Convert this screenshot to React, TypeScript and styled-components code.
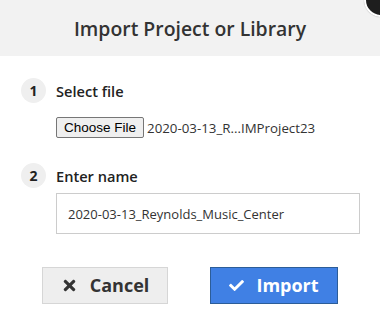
import styled, { createGlobalStyle } from 'styled-components'
import { FaTimes, FaCheck } from 'react-icons/fa'

const GlobalStyle = createGlobalStyle`
  html, body { margin: 0; padding: 0; background: #fff; }
  body { font-family: "Open Sans", "Liberation Sans", sans-serif; color: #333; }
`

// ─── Layout ───────────────────────────────────────────────────────────────────

const Dialog = styled.div`
  position: relative;
  width: 380px;
  height: 335px;
  overflow: hidden;
  background: #fff;
`

const Header = styled.header`
  height: 56px;
  background: #f2f2f2;
  display: flex;
  align-items: center;
  justify-content: center;
`

const Title = styled.h1`
  margin: 0;
  font-size: 19.4px;
  font-weight: 600;
  color: #333;
`

const CloseBtn = styled.button`
  position: absolute;
  left: 364px;
  top: -17px;
  width: 34px;
  height: 34px;
  border-radius: 50%;
  border: 2px solid #fff;
  background: #1e1e1e;
  box-shadow: 0 0 1px rgba(0, 0, 0, 0.4);
  padding: 0;
`

const Body = styled.div`
  padding: 22px 21px 0;
`

const Step = styled.div<{ $gap?: number }>`
  display: flex;
  gap: 10px;
  margin-top: ${p => p.$gap ?? 0}px;
`

const StepNum = styled.div`
  flex-shrink: 0;
  width: 25px;
  height: 25px;
  border-radius: 50%;
  background: #efefef;
  display: flex;
  align-items: center;
  justify-content: center;
  font-size: 14px;
  font-weight: 700;
  color: #222;
`

const StepContent = styled.div`
  flex: 1;
  display: flex;
  flex-direction: column;
`

const StepLabel = styled.div`
  height: 25px;
  line-height: 27px;
  font-size: 14.6px;
  font-weight: 600;
  color: #222;
`

const FileRow = styled.div`
  margin-top: 14px;
  display: flex;
  align-items: center;
  gap: 3px;
`

const FileButton = styled.button`
  height: 21px;
  padding: 1px 7px;
  font-family: "Liberation Sans", Arial, sans-serif;
  font-size: 13.5px;
  color: #000;
  background: #efefef;
  border: 1px solid #767676;
  border-radius: 2px;
`

const FileName = styled.span`
  font-size: 13.3px;
  color: #333;
`

const NameInput = styled.input`
  margin-top: 5px;
  box-sizing: border-box;
  width: 304px;
  height: 41px;
  padding: 0 11px;
  border: 1px solid #cccccc;
  border-radius: 0;
  font-family: "Open Sans", "Liberation Sans", sans-serif;
  font-size: 13px;
  color: #333;
  outline: none;
`

const Footer = styled.div`
  margin-top: 33px;
  display: flex;
  justify-content: center;
  gap: 42px;
`

const ActionBtn = styled.button<{ $primary?: boolean }>`
  box-sizing: border-box;
  height: 37px;
  width: ${p => (p.$primary ? 128 : 126)}px;
  display: flex;
  align-items: center;
  justify-content: center;
  gap: 12px;
  font-family: "Open Sans", "Liberation Sans", sans-serif;
  font-size: 18px;
  font-weight: 700;
  border-radius: 0;
  background: ${p => (p.$primary ? '#4080e4' : '#eeeeee')};
  color: ${p => (p.$primary ? '#fff' : '#333')};
  border: 1px solid ${p => (p.$primary ? '#2c5d98' : '#d6d6d6')};
  padding: 0 0 1px;
`

// ─── App ──────────────────────────────────────────────────────────────────────

export default function App() {
  return (
    <>
      <GlobalStyle />
      <Dialog>
        <Header>
          <Title>Import Project or Library</Title>
        </Header>
        <CloseBtn aria-label="Close" />

        <Body>
          <Step>
            <StepNum>1</StepNum>
            <StepContent>
              <StepLabel>Select file</StepLabel>
              <FileRow>
                <FileButton>Choose File</FileButton>
                <FileName>2020-03-13_R...IMProject23</FileName>
              </FileRow>
            </StepContent>
          </Step>

          <Step $gap={25}>
            <StepNum>2</StepNum>
            <StepContent>
              <StepLabel>Enter name</StepLabel>
              <NameInput defaultValue="2020-03-13_Reynolds_Music_Center" />
            </StepContent>
          </Step>
        </Body>

        <Footer>
          <ActionBtn>
            <FaTimes size={17} />
            Cancel
          </ActionBtn>
          <ActionBtn $primary>
            <FaCheck size={15} />
            Import
          </ActionBtn>
        </Footer>
      </Dialog>
    </>
  )
}
